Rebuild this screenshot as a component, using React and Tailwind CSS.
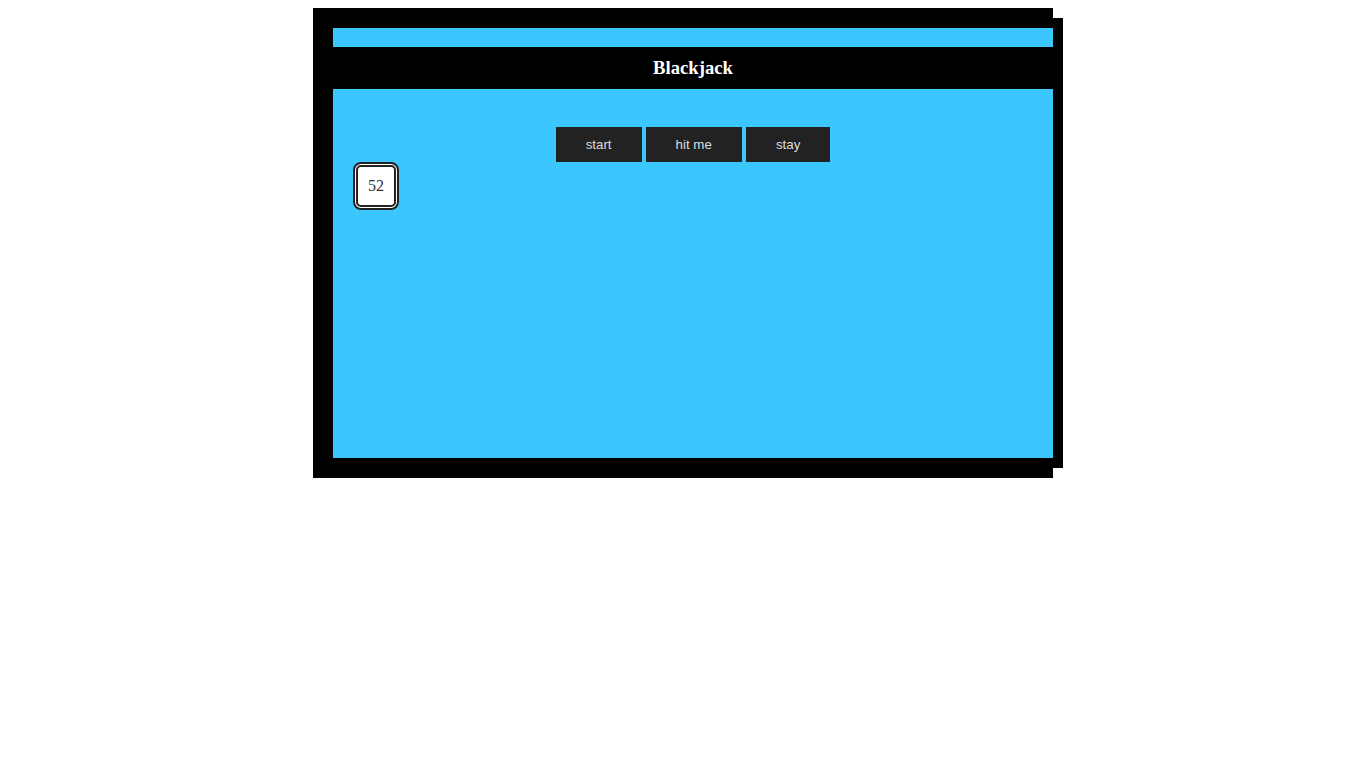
export default function App() {
  const buttons = ['start', 'hit me', 'stay'];

  return (
    <div className="min-h-screen bg-white pt-2">
      <div className="mx-auto w-[740px] bg-black py-5 pl-5 shadow-[20px_0_0_-10px_#000]">
        <div className="h-[19px] bg-[#3bc6fe]" />
        <h1 className="flex h-[42px] items-center justify-center font-['Liberation_Serif',serif] text-[18.72px] font-bold text-white">
          Blackjack
        </h1>
        <div className="h-[369px] bg-[#3bc6fe] pt-[38px]">
          <div className="flex justify-center gap-1">
            {buttons.map((label) => (
              <button
                key={label}
                className="h-[35px] bg-[#222] px-[30px] font-['Liberation_Sans',sans-serif] text-[13.33px] text-[#ddd]"
              >
                {label}
              </button>
            ))}
          </div>
          <div className="ml-[20px] flex h-[48px] w-[46px] items-center justify-center rounded-lg border-[5px] border-double border-[#222] bg-white font-['Liberation_Serif',serif] text-[16px] text-[#333]">
            52
          </div>
        </div>
      </div>
    </div>
  );
}
